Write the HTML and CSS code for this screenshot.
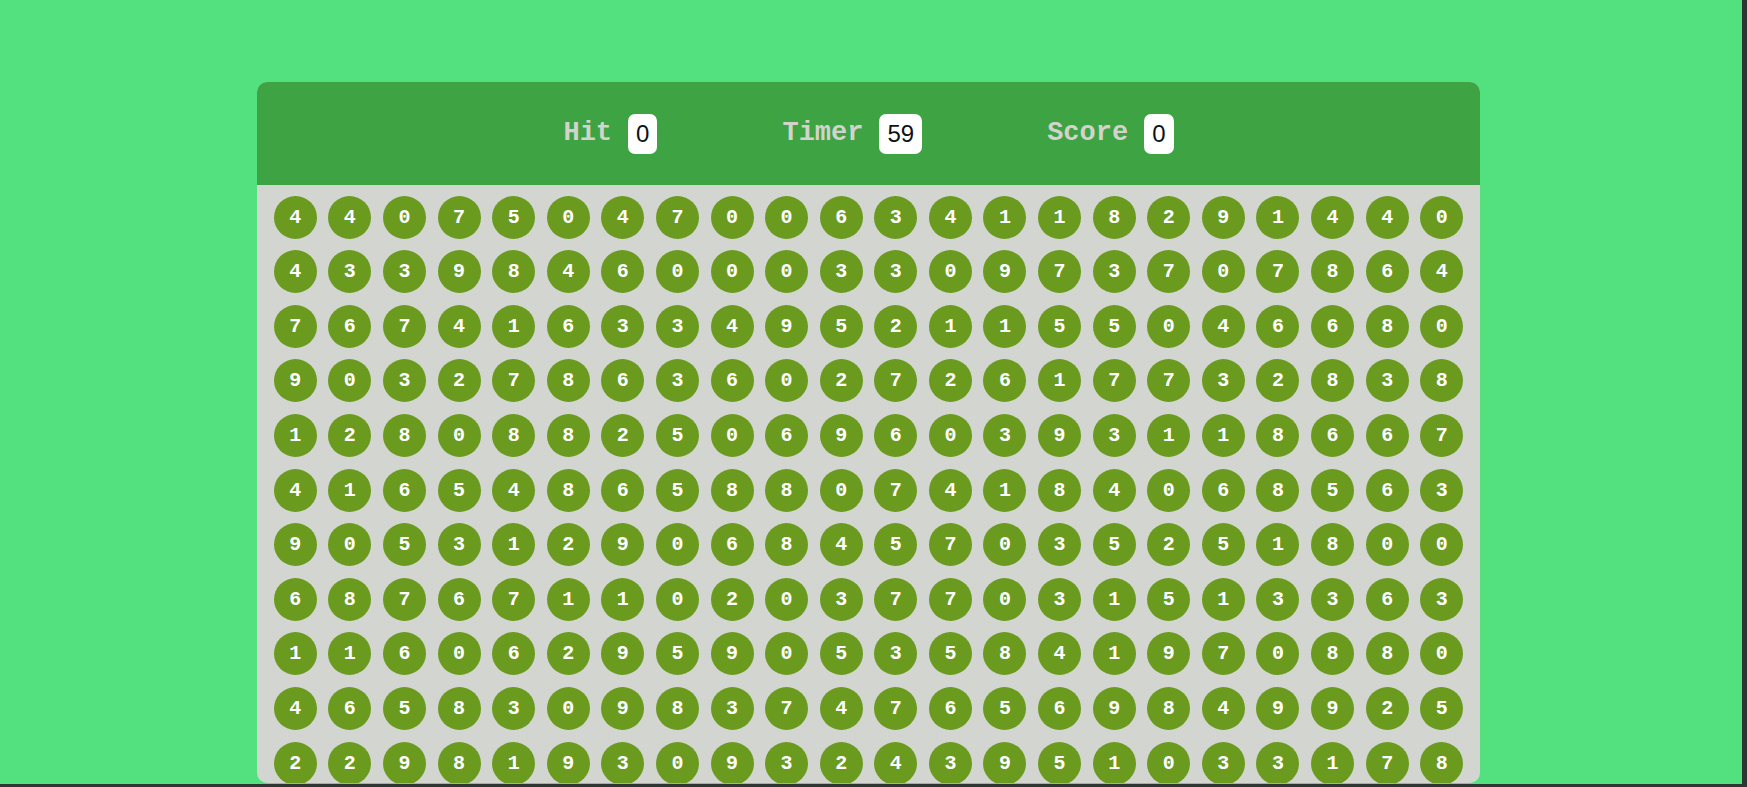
FILE: index.html
```html
<!DOCTYPE html>
<html lang="en">
<head>
<meta charset="utf-8">
<title>Bubble Game</title>
<link rel="stylesheet" href="styles.css">
</head>
<body>
<div class="screen">
  <div class="panel">
    <div class="top">
      <div class="stat"><span class="label">Hit</span><span class="box">0</span></div>
      <div class="stat"><span class="label">Timer</span><span class="box">59</span></div>
      <div class="stat"><span class="label">Score</span><span class="box">0</span></div>
    </div>
    <div class="board">
      <div class="bubble">4</div><div class="bubble">4</div><div class="bubble">0</div><div class="bubble">7</div><div class="bubble">5</div><div class="bubble">0</div><div class="bubble">4</div><div class="bubble">7</div><div class="bubble">0</div><div class="bubble">0</div><div class="bubble">6</div><div class="bubble">3</div><div class="bubble">4</div><div class="bubble">1</div><div class="bubble">1</div><div class="bubble">8</div><div class="bubble">2</div><div class="bubble">9</div><div class="bubble">1</div><div class="bubble">4</div><div class="bubble">4</div><div class="bubble">0</div>
      <div class="bubble">4</div><div class="bubble">3</div><div class="bubble">3</div><div class="bubble">9</div><div class="bubble">8</div><div class="bubble">4</div><div class="bubble">6</div><div class="bubble">0</div><div class="bubble">0</div><div class="bubble">0</div><div class="bubble">3</div><div class="bubble">3</div><div class="bubble">0</div><div class="bubble">9</div><div class="bubble">7</div><div class="bubble">3</div><div class="bubble">7</div><div class="bubble">0</div><div class="bubble">7</div><div class="bubble">8</div><div class="bubble">6</div><div class="bubble">4</div>
      <div class="bubble">7</div><div class="bubble">6</div><div class="bubble">7</div><div class="bubble">4</div><div class="bubble">1</div><div class="bubble">6</div><div class="bubble">3</div><div class="bubble">3</div><div class="bubble">4</div><div class="bubble">9</div><div class="bubble">5</div><div class="bubble">2</div><div class="bubble">1</div><div class="bubble">1</div><div class="bubble">5</div><div class="bubble">5</div><div class="bubble">0</div><div class="bubble">4</div><div class="bubble">6</div><div class="bubble">6</div><div class="bubble">8</div><div class="bubble">0</div>
      <div class="bubble">9</div><div class="bubble">0</div><div class="bubble">3</div><div class="bubble">2</div><div class="bubble">7</div><div class="bubble">8</div><div class="bubble">6</div><div class="bubble">3</div><div class="bubble">6</div><div class="bubble">0</div><div class="bubble">2</div><div class="bubble">7</div><div class="bubble">2</div><div class="bubble">6</div><div class="bubble">1</div><div class="bubble">7</div><div class="bubble">7</div><div class="bubble">3</div><div class="bubble">2</div><div class="bubble">8</div><div class="bubble">3</div><div class="bubble">8</div>
      <div class="bubble">1</div><div class="bubble">2</div><div class="bubble">8</div><div class="bubble">0</div><div class="bubble">8</div><div class="bubble">8</div><div class="bubble">2</div><div class="bubble">5</div><div class="bubble">0</div><div class="bubble">6</div><div class="bubble">9</div><div class="bubble">6</div><div class="bubble">0</div><div class="bubble">3</div><div class="bubble">9</div><div class="bubble">3</div><div class="bubble">1</div><div class="bubble">1</div><div class="bubble">8</div><div class="bubble">6</div><div class="bubble">6</div><div class="bubble">7</div>
      <div class="bubble">4</div><div class="bubble">1</div><div class="bubble">6</div><div class="bubble">5</div><div class="bubble">4</div><div class="bubble">8</div><div class="bubble">6</div><div class="bubble">5</div><div class="bubble">8</div><div class="bubble">8</div><div class="bubble">0</div><div class="bubble">7</div><div class="bubble">4</div><div class="bubble">1</div><div class="bubble">8</div><div class="bubble">4</div><div class="bubble">0</div><div class="bubble">6</div><div class="bubble">8</div><div class="bubble">5</div><div class="bubble">6</div><div class="bubble">3</div>
      <div class="bubble">9</div><div class="bubble">0</div><div class="bubble">5</div><div class="bubble">3</div><div class="bubble">1</div><div class="bubble">2</div><div class="bubble">9</div><div class="bubble">0</div><div class="bubble">6</div><div class="bubble">8</div><div class="bubble">4</div><div class="bubble">5</div><div class="bubble">7</div><div class="bubble">0</div><div class="bubble">3</div><div class="bubble">5</div><div class="bubble">2</div><div class="bubble">5</div><div class="bubble">1</div><div class="bubble">8</div><div class="bubble">0</div><div class="bubble">0</div>
      <div class="bubble">6</div><div class="bubble">8</div><div class="bubble">7</div><div class="bubble">6</div><div class="bubble">7</div><div class="bubble">1</div><div class="bubble">1</div><div class="bubble">0</div><div class="bubble">2</div><div class="bubble">0</div><div class="bubble">3</div><div class="bubble">7</div><div class="bubble">7</div><div class="bubble">0</div><div class="bubble">3</div><div class="bubble">1</div><div class="bubble">5</div><div class="bubble">1</div><div class="bubble">3</div><div class="bubble">3</div><div class="bubble">6</div><div class="bubble">3</div>
      <div class="bubble">1</div><div class="bubble">1</div><div class="bubble">6</div><div class="bubble">0</div><div class="bubble">6</div><div class="bubble">2</div><div class="bubble">9</div><div class="bubble">5</div><div class="bubble">9</div><div class="bubble">0</div><div class="bubble">5</div><div class="bubble">3</div><div class="bubble">5</div><div class="bubble">8</div><div class="bubble">4</div><div class="bubble">1</div><div class="bubble">9</div><div class="bubble">7</div><div class="bubble">0</div><div class="bubble">8</div><div class="bubble">8</div><div class="bubble">0</div>
      <div class="bubble">4</div><div class="bubble">6</div><div class="bubble">5</div><div class="bubble">8</div><div class="bubble">3</div><div class="bubble">0</div><div class="bubble">9</div><div class="bubble">8</div><div class="bubble">3</div><div class="bubble">7</div><div class="bubble">4</div><div class="bubble">7</div><div class="bubble">6</div><div class="bubble">5</div><div class="bubble">6</div><div class="bubble">9</div><div class="bubble">8</div><div class="bubble">4</div><div class="bubble">9</div><div class="bubble">9</div><div class="bubble">2</div><div class="bubble">5</div>
      <div class="bubble">2</div><div class="bubble">2</div><div class="bubble">9</div><div class="bubble">8</div><div class="bubble">1</div><div class="bubble">9</div><div class="bubble">3</div><div class="bubble">0</div><div class="bubble">9</div><div class="bubble">3</div><div class="bubble">2</div><div class="bubble">4</div><div class="bubble">3</div><div class="bubble">9</div><div class="bubble">5</div><div class="bubble">1</div><div class="bubble">0</div><div class="bubble">3</div><div class="bubble">3</div><div class="bubble">1</div><div class="bubble">7</div><div class="bubble">8</div>
    </div>
  </div>
</div>
</body>
</html>
```

FILE: styles.css
```css
* {
  box-sizing: border-box;
}

html, body {
  margin: 0;
  padding: 0;
  background: #2f3533;
  overflow: hidden;
}

.screen {
  width: 1742px;
  height: 784px;
  background: #53e07e;
  border-right: 1px solid #9fb3a6;
  box-shadow: 0 3px 0 #1e3d2e;
  padding-top: 82px;
  padding-left: 257px;
}

.panel {
  width: 1223px;
  height: 701px;
  border-radius: 10px;
  overflow: hidden;
  background: #d3d5d0;
  display: flex;
  flex-direction: column;
}

.top {
  height: 103px;
  flex: none;
  background: #3da343;
  display: flex;
  align-items: center;
  justify-content: center;
  gap: 125px;
}

.stat {
  display: flex;
  align-items: center;
  gap: 16px;
}

.label {
  font-family: "Liberation Mono", "Courier New", monospace;
  font-weight: bold;
  font-size: 27px;
  color: #d2d3cc;
  line-height: 1;
}

.box {
  height: 40px;
  padding: 0 8px;
  border-radius: 7px;
  background: #ffffff;
  color: #111111;
  font-family: "Liberation Sans", Arial, sans-serif;
  font-size: 24px;
  display: flex;
  align-items: center;
  justify-content: center;
}

.board {
  display: grid;
  grid-template-columns: repeat(22, 43px);
  grid-auto-rows: 43px;
  column-gap: 11.6px;
  row-gap: 11.6px;
  justify-content: center;
  padding-top: 10.7px;
}

.bubble {
  width: 43px;
  height: 43px;
  border-radius: 50%;
  background: #6a9b1f;
  color: #ffffff;
  font-family: "Liberation Mono", "Courier New", monospace;
  font-weight: bold;
  font-size: 20px;
  display: flex;
  align-items: center;
  justify-content: center;
}
```
